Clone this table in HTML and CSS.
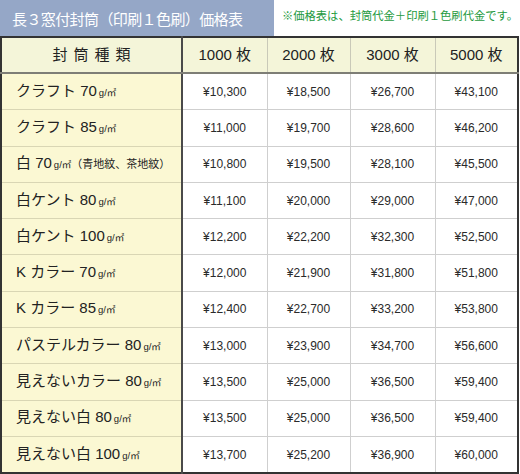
FILE: index.html
```html
<!DOCTYPE html>
<html lang="ja">
<head>
<meta charset="utf-8">
<link rel="stylesheet" href="styles.css">
</head>
<body>
<div class="wrap">
  <div class="top">
    <div class="title">長３窓付封筒（印刷１色刷）価格表</div>
    <div class="note">※価格表は、封筒代金＋印刷１色刷代金です。</div>
  </div>
  <table class="price">
    <colgroup>
      <col class="c-name"><col class="c-a"><col class="c-b"><col class="c-a"><col class="c-b">
    </colgroup>
    <thead>
      <tr><th class="kind">封筒種類</th><th>1000 枚</th><th>2000 枚</th><th>3000 枚</th><th>5000 枚</th></tr>
    </thead>
    <tbody>
      <tr><td class="name">クラフト 70<span class="u">g/㎡</span></td><td>¥10,300</td><td>¥18,500</td><td>¥26,700</td><td>¥43,100</td></tr>
      <tr><td class="name">クラフト 85<span class="u">g/㎡</span></td><td>¥11,000</td><td>¥19,700</td><td>¥28,600</td><td>¥46,200</td></tr>
      <tr><td class="name">白 70<span class="u">g/㎡</span><span class="sub">（青地紋、茶地紋）</span></td><td>¥10,800</td><td>¥19,500</td><td>¥28,100</td><td>¥45,500</td></tr>
      <tr><td class="name">白ケント 80<span class="u">g/㎡</span></td><td>¥11,100</td><td>¥20,000</td><td>¥29,000</td><td>¥47,000</td></tr>
      <tr><td class="name">白ケント 100<span class="u">g/㎡</span></td><td>¥12,200</td><td>¥22,200</td><td>¥32,300</td><td>¥52,500</td></tr>
      <tr><td class="name">K カラー 70<span class="u">g/㎡</span></td><td>¥12,000</td><td>¥21,900</td><td>¥31,800</td><td>¥51,800</td></tr>
      <tr><td class="name">K カラー 85<span class="u">g/㎡</span></td><td>¥12,400</td><td>¥22,700</td><td>¥33,200</td><td>¥53,800</td></tr>
      <tr><td class="name">パステルカラー 80<span class="u">g/㎡</span></td><td>¥13,000</td><td>¥23,900</td><td>¥34,700</td><td>¥56,600</td></tr>
      <tr><td class="name">見えないカラー 80<span class="u">g/㎡</span></td><td>¥13,500</td><td>¥25,000</td><td>¥36,500</td><td>¥59,400</td></tr>
      <tr><td class="name">見えない白 80<span class="u">g/㎡</span></td><td>¥13,500</td><td>¥25,000</td><td>¥36,500</td><td>¥59,400</td></tr>
      <tr><td class="name">見えない白 100<span class="u">g/㎡</span></td><td>¥13,700</td><td>¥25,200</td><td>¥36,900</td><td>¥60,000</td></tr>
    </tbody>
  </table>
</div>
</body>
</html>
```

FILE: styles.css
```css
html, body {
  margin: 0;
  padding: 0;
  background: #ffffff;
}
body {
  font-family: "Liberation Sans", "Noto Sans CJK JP", sans-serif;
  color: #222;
}
.wrap {
  width: 518px;
}
.top {
  display: flex;
  align-items: center;
  height: 36px;
}
.title {
  width: 275px;
  height: 36px;
  box-sizing: border-box;
  background: #95a7c7;
  color: #ffffff;
  font-size: 15px;
  line-height: 36px;
  padding: 2px 0 0 12px;
  white-space: nowrap;
  letter-spacing: -0.6px;
}
.note {
  padding-left: 8px;
  margin-top: -6px;
  color: #1e9a3e;
  font-size: 11.3px;
  white-space: nowrap;
}
.price {
  width: 518px;
  border-collapse: collapse;
  table-layout: fixed;
  border: 2px solid #333;
  line-height: 18px;
}
.c-name { width: 181px; }
.c-a { width: 85px; }
.c-b { width: 83px; }
.price th {
  height: 34px;
  background: #f4f5d9;
  font-weight: normal;
  font-size: 15px;
  text-align: center;
  border-bottom: 2px solid #7e7e76;
  border-left: 1px solid #c9c9b8;
  padding: 0;
  color: #222;
}
.price th.kind {
  letter-spacing: 6px;
  padding-left: 6px;
}
.price td {
  height: 35.3px;
  padding: 0;
  text-align: center;
  font-size: 12px;
  border-top: 1px solid #cfcfcf;
  border-left: 1px solid #cfcfcf;
  color: #2a2a2a;
}
.price td.name,
.price th.kind {
  border-right: 2px solid #4a4a4a;
}
.price td.name {
  background: #fbf8d3;
  text-align: left;
  padding-left: 14px;
  font-size: 15px;
  white-space: nowrap;
  border-top: 1px solid #d9d6b4;
  color: #222;
}
.u {
  font-size: 9.5px;
  margin-left: 2px;
}
.sub {
  font-size: 11px;
}
```
